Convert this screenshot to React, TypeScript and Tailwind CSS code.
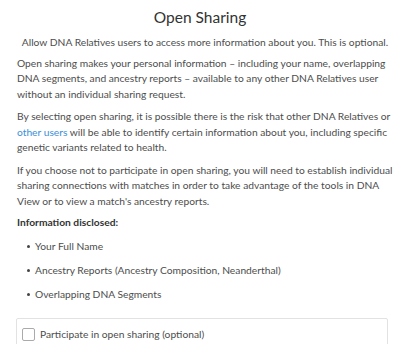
import React from "react";

export default function App() {
  return (
    <div
      className="w-[400px] h-[344px] overflow-hidden bg-white text-[#4d4d4d] text-[10.25px] leading-[15.5px]"
      style={{ fontFamily: "Lato, 'Open Sans', sans-serif" }}
    >
      <h1 className="text-center text-[15.5px] leading-[20px] text-[#333] pt-[7px]">Open Sharing</h1>
      <p className="text-center mt-[8px] pl-[10px]">
        Allow DNA Relatives users to access more information about you. This is optional.
      </p>
      <div className="pl-[17px] pr-[3px]">
        <p className="mt-[5px]">
          Open sharing makes your personal information – including your name, overlapping
          <br />
          DNA segments, and ancestry reports – available to any other DNA Relatives user
          <br />
          without an individual sharing request.
        </p>
        <p className="mt-[7px]">
          By selecting open sharing, it is possible there is the risk that other DNA Relatives or
          <br />
          <span className="text-[#3a8fd9]">other users</span> will be able to identify certain information about you,
          including specific
          <br />
          genetic variants related to health.
        </p>
        <p className="mt-[7px]">
          If you choose not to participate in open sharing, you will need to establish individual
          <br />
          sharing connections with matches in order to take advantage of the tools in DNA
          <br />
          View or to view a match's ancestry reports.
        </p>
        <p className="mt-[6px] font-bold text-[#333]">Information disclosed:</p>
        <ul className="mt-[8.5px] pl-[10px] flex flex-col gap-[8.5px]">
          {[
            "Your Full Name",
            "Ancestry Reports (Ancestry Composition, Neanderthal)",
            "Overlapping DNA Segments",
          ].map((t) => (
            <li key={t} className="flex items-center gap-[5px]">
              <span className="w-[3px] h-[3px] rounded-full bg-[#444]" />
              <span>{t}</span>
            </li>
          ))}
        </ul>
      </div>
      <div className="ml-[16px] w-[372px] mt-[15px] border border-[#e2e2e2] rounded-[2px] px-[5px] pt-[8px] pb-[8px] flex items-center gap-[5px]">
        <span className="w-[13px] h-[13px] border border-[#aaa] rounded-[2px] bg-white shrink-0" />
        <span>Participate in open sharing (optional)</span>
      </div>
    </div>
  );
}
